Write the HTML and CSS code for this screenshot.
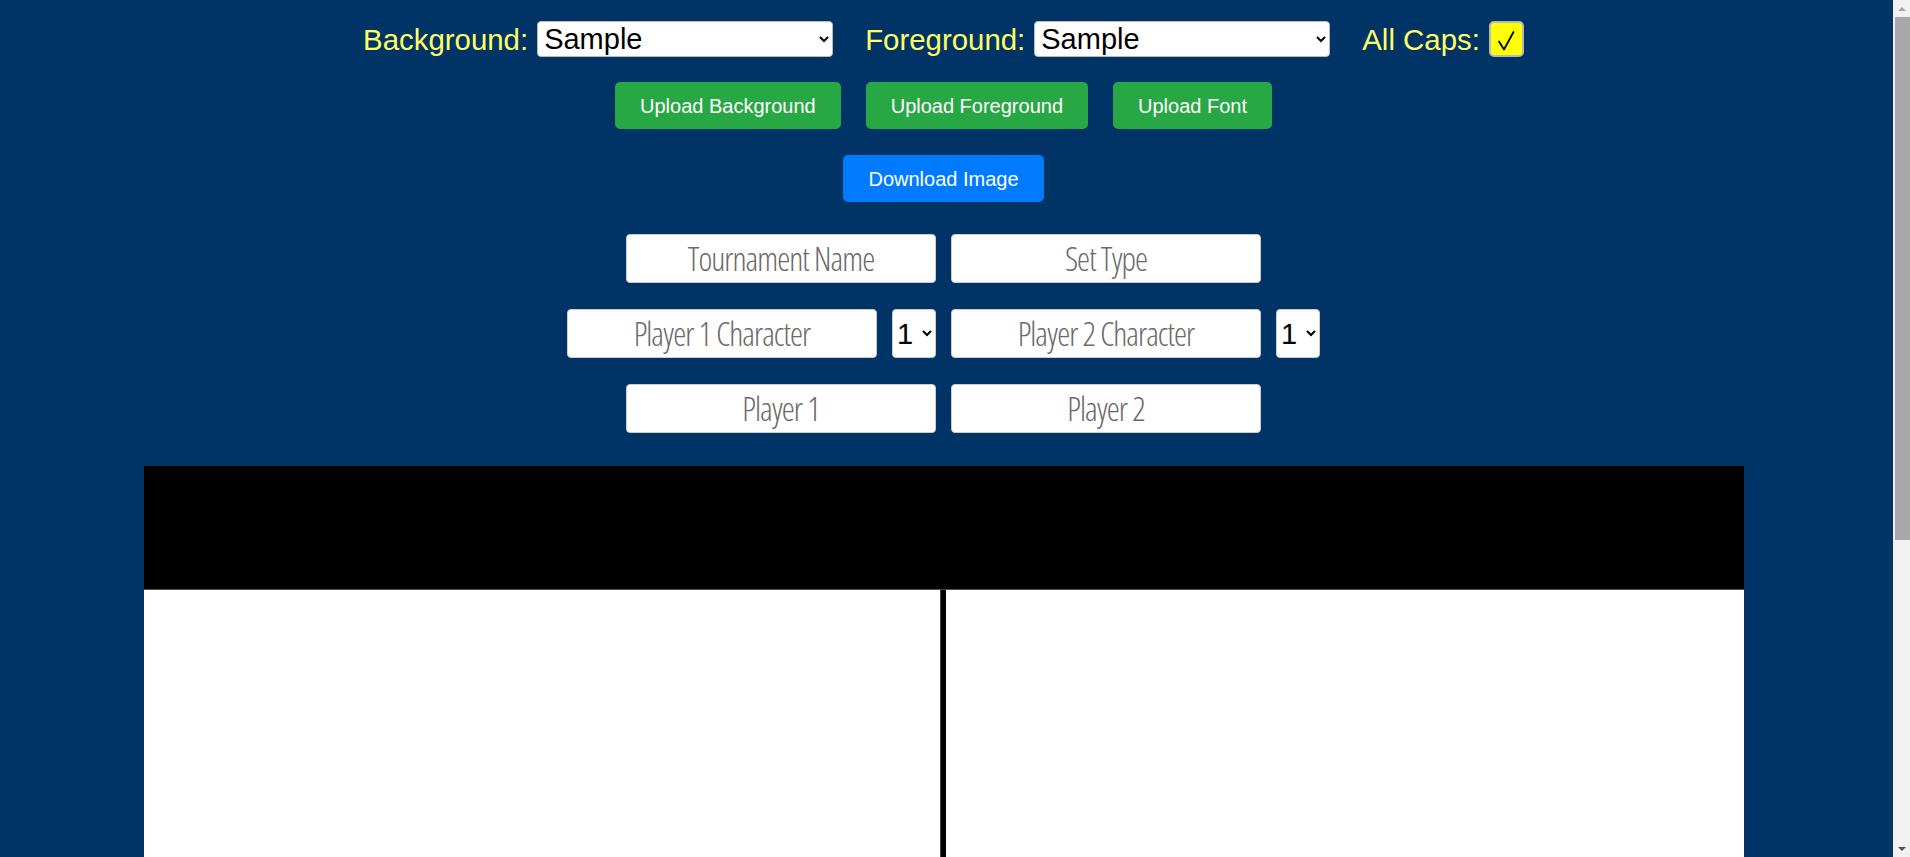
FILE: index.html
```html
<!DOCTYPE html>
<html lang="en">
<head>
<meta charset="utf-8">
<title>Thumbnail Generator</title>
<link rel="stylesheet" href="styles.css">
</head>
<body>
<div class="app">
  <div class="row row-top">
    <label class="lbl" for="bg">Background:</label>
    <select id="bg" class="pick"><option>Sample</option></select>
    <label class="lbl lbl-gap" for="fg">Foreground:</label>
    <select id="fg" class="pick"><option>Sample</option></select>
    <span class="lbl lbl-gap">All Caps:</span>
    <span class="check" role="checkbox" aria-checked="true">
      <svg width="31" height="32" viewBox="0 0 31 32"><polyline points="8,18.5 13,26.5 22.5,9" fill="none" stroke="#000" stroke-width="1.8" stroke-linecap="round" stroke-linejoin="round"/></svg>
    </span>
  </div>
  <div class="row row-buttons">
    <button class="btn btn-green">Upload Background</button>
    <button class="btn btn-green">Upload Foreground</button>
    <button class="btn btn-green">Upload Font</button>
  </div>
  <div class="row row-download">
    <button class="btn btn-blue">Download Image</button>
  </div>
  <div class="row row-inputs first">
    <input class="field" type="text" placeholder="Tournament Name">
    <input class="field" type="text" placeholder="Set Type">
  </div>
  <div class="row row-inputs">
    <input class="field" type="text" placeholder="Player 1 Character">
    <select class="num"><option>1</option></select>
    <input class="field" type="text" placeholder="Player 2 Character">
    <select class="num"><option>1</option></select>
  </div>
  <div class="row row-inputs">
    <input class="field" type="text" placeholder="Player 1">
    <input class="field" type="text" placeholder="Player 2">
  </div>
  <div class="preview">
    <div class="band"></div>
    <div class="halves">
      <div class="half"></div>
      <div class="divider"></div>
      <div class="half"></div>
    </div>
  </div>
</div>
<div class="scrollbar" aria-hidden="true">
  <div class="sb-arrow sb-up"></div>
  <div class="sb-track"><div class="sb-thumb"></div></div>
  <div class="sb-arrow sb-down"></div>
</div>
</body>
</html>
```

FILE: styles.css
```css
html, body {
  margin: 0;
  padding: 0;
}
body {
  background: #003366;
  font-family: "Liberation Sans", Arial, sans-serif;
}
.app {
  display: flex;
  flex-direction: column;
  align-items: center;
  padding: 21px 23px 8px 0;
}
.row {
  display: flex;
  align-items: center;
  justify-content: center;
}
.row-top {
  height: 36px;
}
.lbl {
  color: #ffff66;
  font-size: 29.4px;
  line-height: 33px;
  margin-right: 9px;
}
.lbl-gap {
  margin-left: 32px;
}
.pick {
  width: 296px;
  height: 36px;
  font-family: "Liberation Sans", Arial, sans-serif;
  font-size: 29px;
  color: #000;
  background: #fff;
  border: 1px solid #bbb;
  border-radius: 4px;
  padding: 0 2px;
}
.check {
  box-sizing: border-box;
  width: 35px;
  height: 36px;
  background: #ffff00;
  border: 2px solid #b8b8b8;
  border-radius: 5px;
  display: flex;
}
.row-buttons {
  margin-top: 25px;
  gap: 25px;
}
.row-download {
  margin-top: 26px;
}
.btn {
  font-family: "Liberation Sans", Arial, sans-serif;
  font-size: 20px;
  line-height: 23px;
  padding: 13px 25px 11px;
  color: #fff;
  border: none;
  border-radius: 5px;
}
.btn-green {
  background: #28a745;
}
.btn-blue {
  background: #007bff;
}
.row-inputs {
  margin-top: 26px;
  gap: 15px;
}
.row-inputs.first {
  margin-top: 32px;
}
.field {
  box-sizing: border-box;
  width: 310px;
  height: 49px;
  background: #fff;
  border: 1px solid #ccc;
  border-radius: 4px;
  text-align: center;
  font-family: "Open Sans", "DejaVu Sans", sans-serif;
  font-stretch: 75%;
  font-weight: 300;
  font-size: 33px;
  letter-spacing: -1px;
  color: #000;
  padding: 0 4px;
}
.field::placeholder {
  color: #6a6a6a;
}
.num {
  box-sizing: border-box;
  width: 44px;
  height: 49px;
  font-family: "Liberation Sans", Arial, sans-serif;
  font-size: 29px;
  background: #fff;
  border: 1px solid #ccc;
  border-radius: 4px;
  padding: 0;
}
.preview {
  margin-top: 33px;
  width: 1600px;
  height: 900px;
  display: flex;
  flex-direction: column;
  background: #fff;
}
.band {
  height: 123px;
  background: #000;
  border-bottom: 1px solid #555;
}
.halves {
  flex: 1;
  display: flex;
}
.half {
  flex: 1;
  background: #fff;
}
.divider {
  width: 5px;
  background: #000;
  box-shadow: 0 0 0 1px #444;
}
.scrollbar {
  position: fixed;
  top: 0;
  right: 0;
  width: 17px;
  height: 100vh;
  background: #f1f1f1;
  display: flex;
  flex-direction: column;
}
.sb-track {
  flex: 1;
  padding: 0 0 0 2px;
}
.sb-thumb {
  height: 523px;
  background: #a8a8a8;
}
.sb-arrow {
  height: 17px;
  display: flex;
  align-items: center;
  justify-content: center;
}
.sb-arrow::before {
  content: "";
  width: 0;
  height: 0;
  border-left: 4px solid transparent;
  border-right: 4px solid transparent;
}
.sb-up::before {
  border-bottom: 4px solid #a3a3a3;
}
.sb-down::before {
  border-top: 4px solid #505050;
}
```
